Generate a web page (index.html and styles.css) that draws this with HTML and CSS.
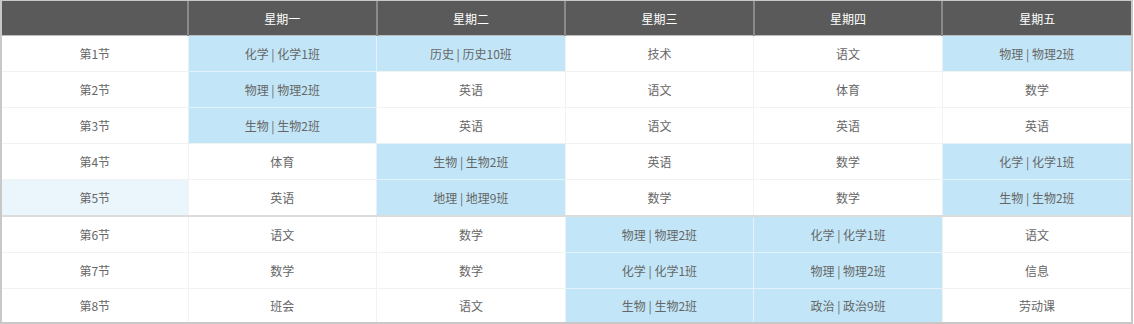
FILE: index.html
```html
<!DOCTYPE html>
<html lang="zh">
<head>
<meta charset="utf-8">
<link rel="stylesheet" href="styles.css">
</head>
<body>
<div class="frame">
<table class="tt">
<colgroup><col class="c-first"><col><col><col><col><col></colgroup>
<thead>
<tr><th></th><th>星期一</th><th>星期二</th><th>星期三</th><th>星期四</th><th>星期五</th></tr>
</thead>
<tbody>
<tr><td>第1节</td><td class="hl">化学 | 化学1班</td><td class="hl">历史 | 历史10班</td><td>技术</td><td>语文</td><td class="hl">物理 | 物理2班</td></tr>
<tr><td>第2节</td><td class="hl">物理 | 物理2班</td><td>英语</td><td>语文</td><td>体育</td><td>数学</td></tr>
<tr><td>第3节</td><td class="hl">生物 | 生物2班</td><td>英语</td><td>语文</td><td>英语</td><td>英语</td></tr>
<tr><td>第4节</td><td>体育</td><td class="hl">生物 | 生物2班</td><td>英语</td><td>数学</td><td class="hl">化学 | 化学1班</td></tr>
<tr class="hover split"><td class="lesson">第5节</td><td>英语</td><td class="hl">地理 | 地理9班</td><td>数学</td><td>数学</td><td class="hl">生物 | 生物2班</td></tr>
<tr><td>第6节</td><td>语文</td><td>数学</td><td class="hl">物理 | 物理2班</td><td class="hl">化学 | 化学1班</td><td>语文</td></tr>
<tr><td>第7节</td><td>数学</td><td>数学</td><td class="hl">化学 | 化学1班</td><td class="hl">物理 | 物理2班</td><td>信息</td></tr>
<tr class="last"><td>第8节</td><td>班会</td><td>语文</td><td class="hl">生物 | 生物2班</td><td class="hl">政治 | 政治9班</td><td>劳动课</td></tr>
</tbody>
</table>
</div>
</body>
</html>
```
FILE: styles.css
```css
html, body {
  margin: 0;
  padding: 0;
  background: #ffffff;
}
.frame {
  width: 1129px;
  border-left: 2px solid #c8c8c8;
  border-right: 2px solid #c8c8c8;
  border-bottom: 2px solid #c8c8c8;
  border-top: 1px solid #c8c8c8;
}
.tt {
  width: 100%;
  border-collapse: collapse;
  table-layout: fixed;
  font-family: "Noto Sans CJK SC", "Liberation Sans", sans-serif;
  font-size: 12px;
  color: #666666;
}
.c-first { width: 186px; }
.tt th {
  height: 34px;
  background: #5a5a5a;
  color: #ffffff;
  font-weight: normal;
  border-left: 2px solid #8a8a8a;
  border-bottom: 1px solid #bdbdbd;
  padding: 0;
}
.tt th:first-child { border-left: none; }
.tt td {
  height: 35px;
  padding: 0;
  text-align: center;
  border-left: 1px solid #f2f2f2;
  border-top: 1px solid #f2f2f2;
}
.tt td:first-child { border-left: none; }
.tt td.hl {
  background: #c2e6f8;
  border-color: #e4f3fb;
}
.tt tr.hover td.lesson { background: #ebf5fc; }
.tt tr.split td { border-bottom: 2px solid #dcdcdc; }
.tt tr.last td { height: 33px; }
```
